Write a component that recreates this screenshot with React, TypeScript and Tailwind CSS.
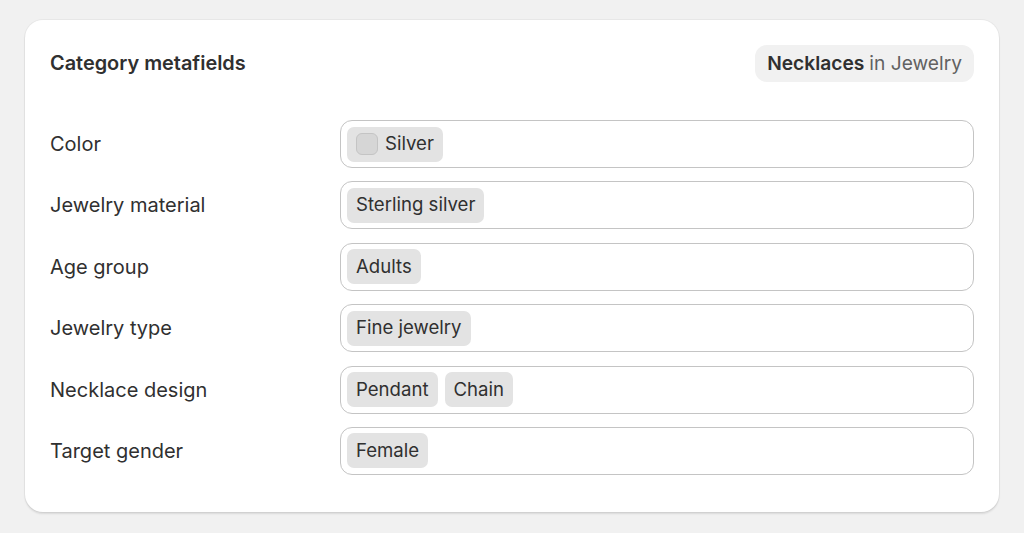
const fields = [
  { label: "Color", values: ["Silver"], swatch: true },
  { label: "Jewelry material", values: ["Sterling silver"] },
  { label: "Age group", values: ["Adults"] },
  { label: "Jewelry type", values: ["Fine jewelry"] },
  { label: "Necklace design", values: ["Pendant", "Chain"] },
  { label: "Target gender", values: ["Female"] },
];

function Chip({ text, swatch }: { text: string; swatch?: boolean }) {
  return (
    <span className="flex h-[35px] items-center gap-[7px] rounded-[7px] bg-[#e3e3e3] px-[9px] text-[18.6px] text-[#303030]">
      {swatch && (
        <span className="h-[22px] w-[22px] rounded-[6px] border border-[#c4c4c4] bg-[#d6d6d6]" />
      )}
      {text}
    </span>
  );
}

export default function App() {
  return (
    <div
      className="min-h-[533px] w-full bg-[#f1f1f1] px-[25px] pt-[20px] pb-[20px]"
      style={{ fontFamily: "Inter, 'Noto Sans', sans-serif" }}
    >
      <div className="rounded-[18px] bg-white px-[25px] pt-[25px] pb-[37px] shadow-[0_2px_2px_rgba(0,0,0,0.1),0_0_0_1px_rgba(0,0,0,0.04)]">
        <div className="flex h-[37px] items-center justify-between">
          <h2 className="text-[19.9px] font-semibold text-[#303030]">Category metafields</h2>
          <div className="flex h-[37px] items-center rounded-[12px] bg-[#f1f1f1] px-[12px] text-[19.2px]">
            <span className="font-semibold text-[#303030]">Necklaces</span>
            <span className="ml-[5px] text-[#616161]">in Jewelry</span>
          </div>
        </div>
        <div className="mt-[38px] flex flex-col gap-[13.4px]">
          {fields.map((f) => (
            <div key={f.label} className="flex items-center">
              <div className="w-[290px] text-[20px] text-[#303030]">{f.label}</div>
              <div className="flex h-[48px] flex-1 items-center gap-[7px] rounded-[12px] border border-[#c4c4c4] px-[6px]">
                {f.values.map((v) => (
                  <Chip key={v} text={v} swatch={f.swatch} />
                ))}
              </div>
            </div>
          ))}
        </div>
      </div>
    </div>
  );
}
